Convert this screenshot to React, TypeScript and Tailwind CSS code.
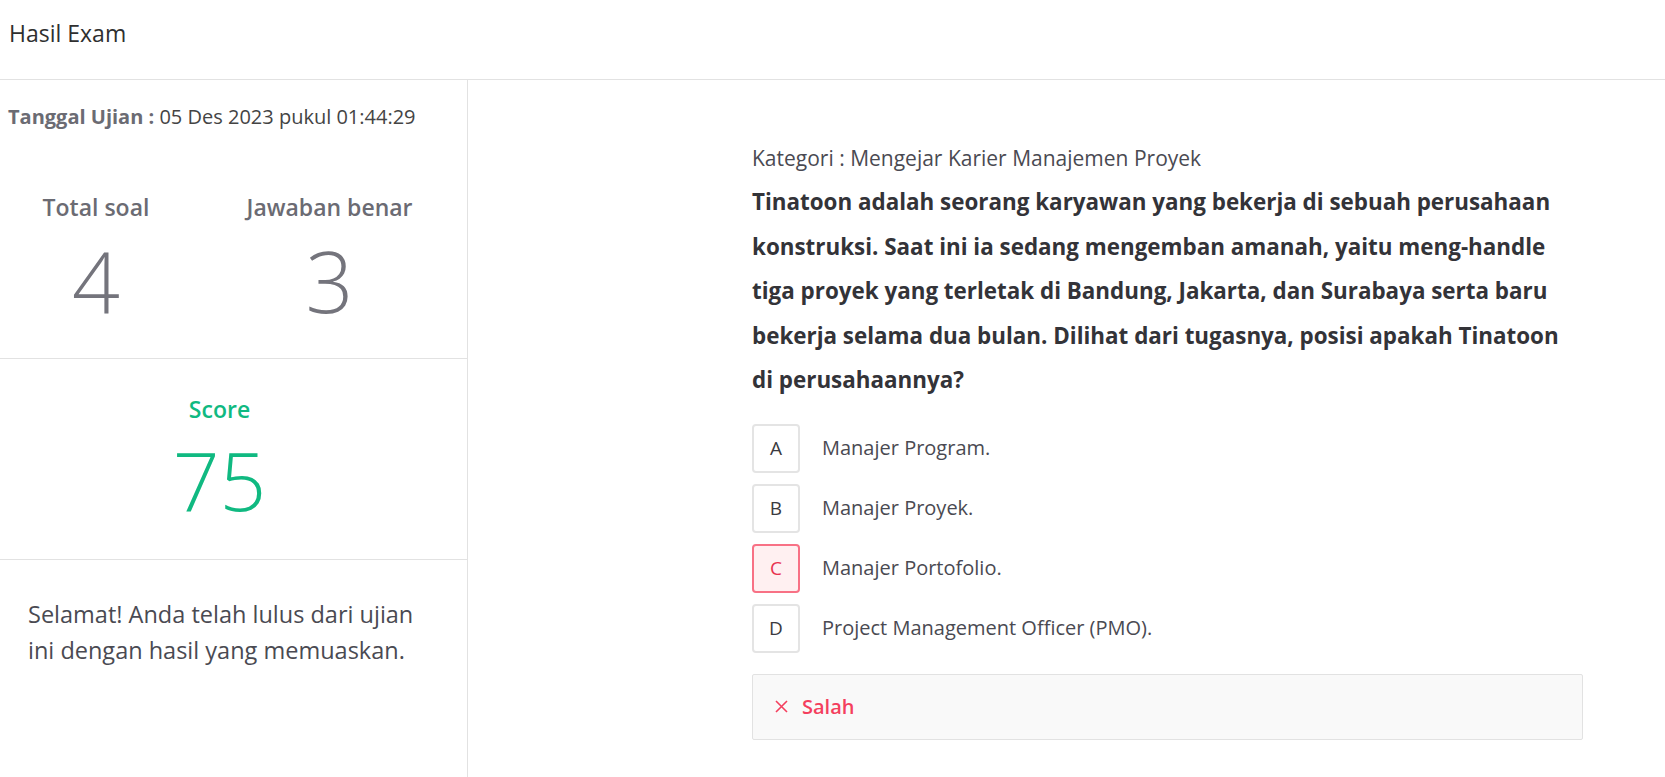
const options = [
  { key: "A", text: "Manajer Program.", wrong: false },
  { key: "B", text: "Manajer Proyek.", wrong: false },
  { key: "C", text: "Manajer Portofolio.", wrong: true },
  { key: "D", text: "Project Management Officer (PMO).", wrong: false },
];

export default function App() {
  return (
    <div className="min-h-screen bg-white font-['Open_Sans',sans-serif] text-[#333]">
      {/* top bar */}
      <header className="h-[80px] border-b border-[#e2e2e2] px-[9px] pt-[17px]">
        <h1 className="text-[23px] leading-[32px] text-[#2f2f2f]">Hasil Exam</h1>
      </header>

      <div className="flex min-h-[697px]">
        {/* summary panel */}
        <aside className="w-[468px] shrink-0 border-r border-[#e2e2e2]">
          <div className="pt-[25px] pb-[35px] border-b border-[#e2e2e2]">
            <p className="px-[8px] text-[20px] leading-[24px] text-[#444]">
              <span className="font-bold text-[#6b6b73]">Tanggal Ujian :</span> 05 Des 2023 pukul 01:44:29
            </p>
            <div className="grid grid-cols-[192px_1fr] mt-[63px] text-center">
              <div>
                <p className="text-[23px] leading-[30px] font-semibold text-[#6b6b73]">Total soal</p>
                <p className="mt-[17px] text-[84px] leading-[84px] font-light text-[#74747c]">4</p>
              </div>
              <div>
                <p className="text-[23px] leading-[30px] font-semibold text-[#6b6b73]">Jawaban benar</p>
                <p className="mt-[17px] text-[84px] leading-[84px] font-light text-[#74747c]">3</p>
              </div>
            </div>
          </div>

          <div className="pt-[35px] pb-[38px] border-b border-[#e2e2e2] text-center pr-[28px]">
            <p className="text-[23px] leading-[30px] font-semibold text-[#10b981]">Score</p>
            <p className="mt-[13px] text-[82px] leading-[84px] font-light text-[#10b981]">75</p>
          </div>

          <p className="pt-[36px] pl-[28px] pr-[40px] text-[23.5px] leading-[36px] text-[#4a4a52]">
            Selamat! Anda telah lulus dari ujian ini dengan hasil yang memuaskan.
          </p>
        </aside>

        {/* question panel */}
        <main className="flex-1 pl-[284px] pt-[66px]">
          <div className="w-[831px]">
            <p className="text-[21px] leading-[24px] text-[#4a4a52]">
              Kategori : Mengejar Karier Manajemen Proyek
            </p>
            <p className="mt-[10px] text-[22.4px] leading-[44.5px] font-bold text-[#333338]">
              Tinatoon adalah seorang karyawan yang bekerja di sebuah perusahaan konstruksi. Saat ini ia
              sedang mengemban amanah, yaitu meng-handle tiga proyek yang terletak di Bandung, Jakarta, dan
              Surabaya serta baru bekerja selama dua bulan. Dilihat dari tugasnya, posisi apakah Tinatoon di
              perusahaannya?
            </p>

            <div className="mt-[21px] flex flex-col gap-[11px]">
              {options.map((o) => (
                <div key={o.key} className="flex items-center gap-[22px]">
                  <div
                    className={
                      o.wrong
                        ? "w-[48px] h-[49px] rounded-[4px] border-2 border-[#f87185] bg-[#fff0f1] flex items-center justify-center text-[19px] text-[#e8334f]"
                        : "w-[48px] h-[49px] rounded-[4px] border-2 border-[#e4e4e4] bg-white flex items-center justify-center text-[19px] text-[#3a3a40]"
                    }
                  >
                    {o.key}
                  </div>
                  <span className="text-[20px] text-[#4a4a52]">{o.text}</span>
                </div>
              ))}
            </div>

            <div className="mt-[21px] h-[66px] bg-[#f9f9f9] border border-[#e2e2e2] rounded-[2px] flex items-center pl-[22px] gap-[14px] text-[#f43f5e]">
              <svg width="13" height="13" viewBox="0 0 13 13" fill="none" stroke="currentColor" strokeWidth="1.6">
                <path d="M1 1l11 11M12 1L1 12" />
              </svg>
              <span className="text-[20px] font-semibold">Salah</span>
            </div>
          </div>
        </main>
      </div>
    </div>
  );
}
